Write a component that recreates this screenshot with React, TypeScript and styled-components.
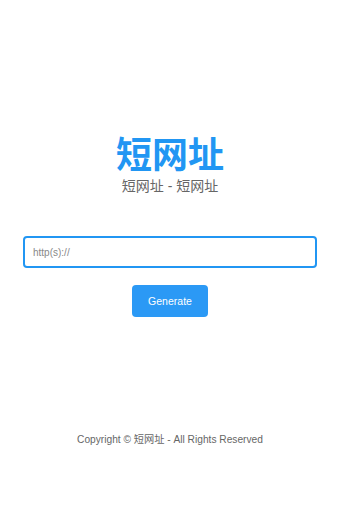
import React from 'react'
import styled, { createGlobalStyle } from 'styled-components'

const GlobalStyle = createGlobalStyle`
	html, body {
		margin: 0;
		padding: 0;
		background: #fff;
	}
	body {
		font-family: 'Liberation Sans', Arial, 'Noto Sans CJK SC', sans-serif;
	}
`

const Page = styled.div`
	width: 340px;
	min-height: 513px;
	display: flex;
	flex-direction: column;
	align-items: center;
	padding-top: 130px;
	box-sizing: border-box;
`

const Title = styled.h1`
	margin: 0;
	font-size: 36px;
	line-height: 44px;
	font-weight: bold;
	color: #2196f3;
	font-family: 'Noto Sans CJK SC', sans-serif;
`

const Subtitle = styled.div`
	margin-top: 3px;
	font-size: 14px;
	line-height: 18px;
	color: #666;
	font-family: 'Liberation Sans', Arial, 'Noto Sans CJK SC', sans-serif;
`

const Form = styled.form`
	margin-top: 41px;
	width: 294px;
	display: flex;
	flex-direction: column;
	align-items: center;
`

const UrlInput = styled.input`
	width: 100%;
	height: 32px;
	box-sizing: border-box;
	border: 2px solid #2196f3;
	border-radius: 4px;
	padding: 0 8px;
	font-size: 10px;
	font-family: 'Liberation Sans', Arial, sans-serif;
	color: #333;
	outline: none;

	&::placeholder {
		color: #888;
	}
`

const Button = styled.button`
	margin-top: 17px;
	width: 76px;
	height: 32px;
	border: none;
	border-radius: 4px;
	background: #2b99f5;
	color: #fff;
	font-size: 10.5px;
	font-family: 'Liberation Sans', Arial, sans-serif;
	cursor: pointer;
`

const Footer = styled.footer`
	margin-top: 114px;
	font-size: 10.2px;
	color: #666;
	font-family: 'Liberation Sans', Arial, 'Noto Sans CJK SC', sans-serif;
`

export default function App() {
	return (
		<>
			<GlobalStyle />
			<Page>
				<Title>短网址</Title>
				<Subtitle>短网址 - 短网址</Subtitle>
				<Form onSubmit={(e) => e.preventDefault()}>
					<UrlInput type="text" placeholder="http(s)://" />
					<Button type="submit">Generate</Button>
				</Form>
				<Footer>Copyright © 短网址 - All Rights Reserved</Footer>
			</Page>
		</>
	)
}
